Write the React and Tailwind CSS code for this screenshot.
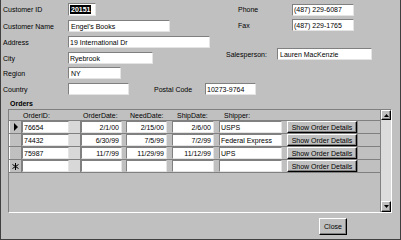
import React from "react";

// sunken text box, win95 style
const sunken =
  "flex items-center bg-white border border-t-[#808080] border-l-[#808080] border-r-[#e4e4e4] border-b-[#e4e4e4] text-[7px] leading-none overflow-hidden whitespace-nowrap";

const raised =
  "flex items-center justify-center bg-[#c0c0c0] border border-t-white border-l-white border-r-black border-b-black shadow-[inset_-1px_-1px_0_#808080] text-[7px] leading-none whitespace-nowrap";

const orders = [
  { id: "76654", date: "2/1/00", need: "2/15/00", ship: "2/6/00", shipper: "USPS", current: true },
  { id: "74432", date: "6/30/99", need: "7/5/99", ship: "7/2/99", shipper: "Federal Express" },
  { id: "75987", date: "11/7/99", need: "11/29/99", ship: "11/12/99", shipper: "UPS" },
  { id: "", date: "", need: "", ship: "", shipper: "", isNew: true },
];

function Label({ children, className = "" }) {
  return <div className={`text-[7px] leading-none whitespace-nowrap ${className}`}>{children}</div>;
}

function Selector({ current, isNew }) {
  return (
    <div className="w-[13px] h-full flex items-center justify-center border-r border-r-[#808080] border-l border-l-white">
      {current && (
        <svg width="6" height="8" viewBox="0 0 6 8">
          <polygon points="1,0 5,4 1,8" fill="#000" />
        </svg>
      )}
      {isNew && (
        <svg width="7" height="7" viewBox="0 0 7 7" stroke="#000" strokeWidth="1">
          <line x1="3.5" y1="0" x2="3.5" y2="7" />
          <line x1="0.5" y1="1.5" x2="6.5" y2="5.5" />
          <line x1="0.5" y1="5.5" x2="6.5" y2="1.5" />
        </svg>
      )}
    </div>
  );
}

function OrderRow({ o }) {
  return (
    <div className="flex h-[13px] border-t border-t-[#808080]">
      <Selector current={o.current} isNew={o.isNew} />
      <div className={`${sunken} w-[47px] h-full pl-[1px]`}>{o.id}</div>
      <div className="w-[12px] h-full bg-[#d8d8d8] border-r border-r-[#808080]"></div>
      <div className={`${sunken} w-[41px] h-full justify-end pr-[2px]`}>{o.date}</div>
      <div className="w-[4px]"></div>
      <div className={`${sunken} w-[41px] h-full justify-end pr-[2px]`}>{o.need}</div>
      <div className="w-[5px]"></div>
      <div className={`${sunken} w-[42px] h-full justify-end pr-[2px]`}>{o.ship}</div>
      <div className="w-[5px]"></div>
      <div className={`${sunken} w-[63px] h-full pl-[1px] border-l-[#404040]`}>{o.shipper}</div>
      <div className="w-[5px]"></div>
      <div className={`${raised} w-[70px] h-full`}>Show Order Details</div>
      <div className="flex-1 h-full border-l border-l-[#808080]"></div>
    </div>
  );
}

export default function App() {
  return (
    <div className="w-[401px] h-[240px] bg-[#c0c0c0] border-l border-r border-b border-[#404040] pl-[2px] overflow-hidden text-black font-['Liberation_Sans',Arial,sans-serif]">
      {/* row: customer id + phone */}
      <div className="flex items-center mt-[3px] h-[13px]">
        <div className="w-[223px] flex items-center">
          <Label className="w-[65px]">Customer ID</Label>
          <div className={`${sunken} w-[28px] h-[13px] pl-[1px]`}>
            <span className="bg-black text-white font-bold px-[1px] py-[1px]">20151</span>
          </div>
        </div>
        <div className="flex items-center pl-[12px]">
          <Label className="w-[54px]">Phone</Label>
          <div className={`${sunken} w-[62px] h-[12px] pl-[1px]`}>(487) 229-6087</div>
        </div>
      </div>

      {/* row: name + fax */}
      <div className="flex items-start mt-[3px] h-[13px]">
        <div className="w-[223px] flex items-center mt-[1px]">
          <Label className="w-[65px]">Customer Name</Label>
          <div className={`${sunken} w-[102px] h-[12px] pl-[2px]`}>Engel's Books</div>
        </div>
        <div className="flex items-center pl-[12px]">
          <Label className="w-[54px]">Fax</Label>
          <div className={`${sunken} w-[62px] h-[12px] pl-[1px]`}>(487) 229-1765</div>
        </div>
      </div>

      {/* row: address */}
      <div className="flex items-center mt-[4px] h-[12px]">
        <Label className="w-[65px]">Address</Label>
        <div className={`${sunken} w-[142px] h-[12px] pl-[1px]`}>19 International Dr</div>
      </div>

      {/* row: city + salesperson */}
      <div className="flex items-start h-[16px]">
        <div className="w-[223px] flex items-center mt-[4px]">
          <Label className="w-[65px]">City</Label>
          <div className={`${sunken} w-[85px] h-[12px] pl-[1px]`}>Ryebrook</div>
        </div>
        <div className="flex items-center">
          <Label className="w-[51px]">Salesperson:</Label>
          <div className={`${sunken} w-[95px] h-[12px] pl-[2px]`}>Lauren MacKenzie</div>
        </div>
      </div>

      {/* row: region */}
      <div className="flex items-center mt-[3px] h-[12px]">
        <Label className="w-[65px]">Region</Label>
        <div className={`${sunken} w-[53px] h-[12px] pl-[2px]`}>NY</div>
      </div>

      {/* row: country + postal */}
      <div className="flex items-center mt-[4px] h-[12px]">
        <Label className="w-[65px]">Country</Label>
        <div className={`${sunken} w-[61px] h-[12px]`}></div>
        <Label className="ml-[25px] w-[51px]">Postal Code</Label>
        <div className={`${sunken} w-[51px] h-[12px] pl-[1px]`}>10273-9764</div>
      </div>

      {/* orders subform */}
      <div className="ml-[7px] mt-[3px] h-[10px] flex items-center text-[7px] font-bold leading-none">Orders</div>
      <div className="ml-[5px] mt-[1px] w-[384px] h-[104px] border border-t-[#808080] border-l-[#808080] border-r-white border-b-white flex">
        <div className="w-[371px] flex flex-col">
          <div className="flex h-[10px] items-center text-[7px] leading-none">
            <div className="w-[13px]"></div>
            <div className="w-[47px] pl-[1px]">OrderID:</div>
            <div className="w-[12px]"></div>
            <div className="w-[41px] pl-[2px]">OrderDate:</div>
            <div className="w-[4px]"></div>
            <div className="w-[41px] pl-[4px]">NeedDate:</div>
            <div className="w-[5px]"></div>
            <div className="w-[42px] pl-[5px]">ShipDate:</div>
            <div className="w-[5px]"></div>
            <div className="w-[63px] pl-[5px]">Shipper:</div>
          </div>
          {orders.map((o, i) => (
            <OrderRow key={i} o={o} />
          ))}
          <div className="border-t border-t-[#808080] flex-1"></div>
        </div>
        {/* scrollbar */}
        <div className="w-[11px] flex flex-col border-l border-l-[#808080]">
          <div className={`${raised} h-[10px]`}>
            <svg width="5" height="3" viewBox="0 0 5 3">
              <polygon points="2.5,0 5,3 0,3" fill="#000" />
            </svg>
          </div>
          <div className="flex-1 bg-[#dcdcdc]"></div>
          <div className={`${raised} h-[11px]`}>
            <svg width="5" height="3" viewBox="0 0 5 3">
              <polygon points="0,0 5,0 2.5,3" fill="#000" />
            </svg>
          </div>
        </div>
      </div>

      <div className="flex justify-end mt-[5px] pr-[53px]">
        <div className={`${raised} w-[28px] h-[17px]`}>Close</div>
      </div>
    </div>
  );
}
